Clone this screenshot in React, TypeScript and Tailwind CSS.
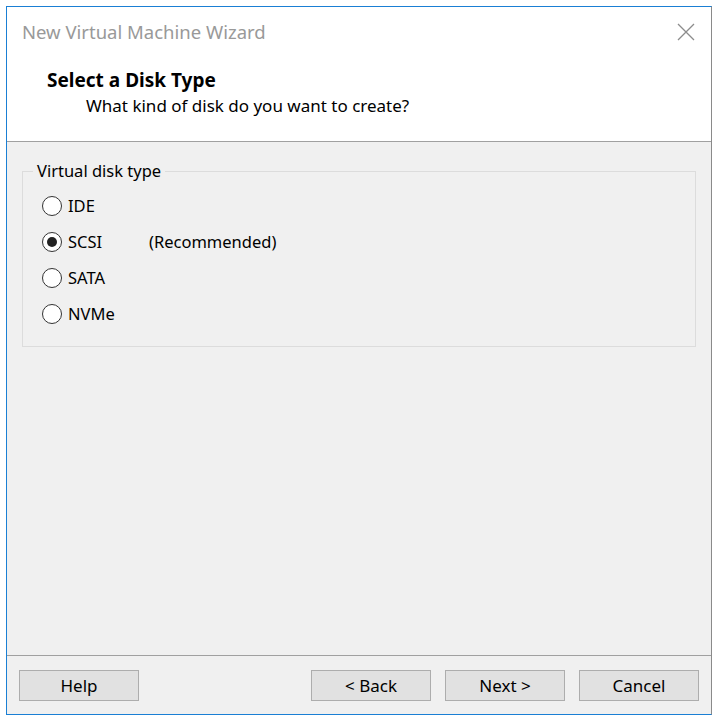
import React from 'react'

const options = [
  { label: 'IDE', checked: false },
  { label: 'SCSI', checked: true, note: '(Recommended)' },
  { label: 'SATA', checked: false },
  { label: 'NVMe', checked: false },
]

function Radio({ checked }: { checked: boolean }) {
  return (
    <span className="flex h-[20px] w-[20px] items-center justify-center rounded-full border border-[#333333] bg-white">
      {checked && <span className="h-[10px] w-[10px] rounded-full bg-[#222222]" />}
    </span>
  )
}

function WinButton({ children }: { children: React.ReactNode }) {
  return (
    <button className="h-[31px] w-[120px] border border-[#adadad] bg-[#e1e1e1] text-[17px] leading-[20px] text-black">
      {children}
    </button>
  )
}

export default function App() {
  return (
    <div
      className="h-[720px] w-[718px] overflow-hidden bg-white pl-[6px] pt-[6px]"
      style={{ fontFamily: '"Noto Sans", "Open Sans", sans-serif' }}
    >
      <div className="flex h-[709px] w-[706px] flex-col border border-[#1a7fd4] border-r-[#8a8a8a] bg-white">
        {/* title bar */}
        <div className="flex h-[50px] shrink-0 items-center justify-between pl-[15px] pr-[16px]">
          <span className="text-[18.5px] text-[#999999]">New Virtual Machine Wizard</span>
          <svg width="18" height="18" viewBox="0 0 18 18" className="mt-[-1px]">
            <path d="M1 1 L17 17 M17 1 L1 17" stroke="#8c8c8c" strokeWidth="1.3" />
          </svg>
        </div>

        {/* header */}
        <div className="flex h-[85px] shrink-0 flex-col border-b border-[#a0a0a0] pl-[40px]">
          <div className="mt-[10px] text-[19px] font-bold leading-[26px] text-black">Select a Disk Type</div>
          <div className="mt-[1px] pl-[39px] text-[17px] leading-[24px] text-black">
            What kind of disk do you want to create?
          </div>
        </div>

        {/* body */}
        <div className="flex flex-1 flex-col bg-[#f0f0f0] px-[15px] pt-[17px]">
          <fieldset className="h-[188px] border border-[#dcdcdc] pl-[19px]">
            <legend className="ml-[-9px] px-[4px] text-[16.5px] leading-[24px] text-black">Virtual disk type</legend>
            <div className="flex flex-col gap-[16px] pt-[13px]">
              {options.map((o) => (
                <div key={o.label} className="flex h-[20px] items-center">
                  <Radio checked={o.checked} />
                  <span className="ml-[6px] w-[81px] text-[16.5px] text-black">{o.label}</span>
                  {o.note && <span className="text-[16.5px] text-black">{o.note}</span>}
                </div>
              ))}
            </div>
          </fieldset>
        </div>

        {/* footer */}
        <div className="flex h-[59px] shrink-0 items-start border-t border-[#a0a0a0] bg-[#f0f0f0] pl-[12px] pr-[12px] pt-[14px]">
          <WinButton>Help</WinButton>
          <div className="ml-auto flex gap-[14px]">
            <WinButton>&lt; Back</WinButton>
            <WinButton>Next &gt;</WinButton>
            <WinButton>Cancel</WinButton>
          </div>
        </div>
      </div>
    </div>
  )
}
